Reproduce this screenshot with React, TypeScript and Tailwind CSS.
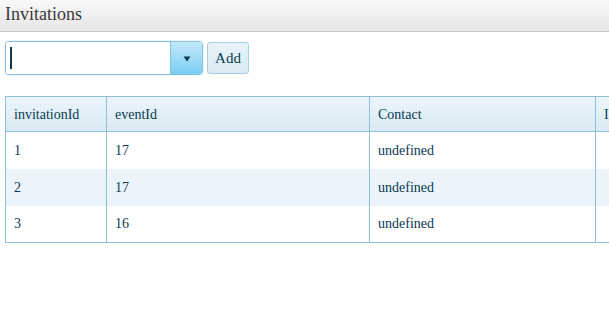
import React from 'react';

const rows = [
  { invitationId: 1, eventId: 17, contact: 'undefined' },
  { invitationId: 2, eventId: 17, contact: 'undefined' },
  { invitationId: 3, eventId: 16, contact: 'undefined' },
];

export default function App() {
  return (
    <div className="w-[609px] h-[312px] overflow-hidden bg-white text-[#0b3a52]" style={{ fontFamily: '"Liberation Serif", "Times New Roman", serif' }}>
      <div className="h-[32px] border-b border-[#c8c8c8] bg-gradient-to-b from-[#f9f9f9] to-[#e6e6e6] pl-[5px] flex items-center">
        <span className="text-[18px] text-[#3a3a3a] leading-none -mt-[4px]">Invitations</span>
      </div>

      <div className="flex items-center gap-[4px] pl-[5px] mt-[9px]">
        <div className="flex w-[198px] h-[34px] border border-[#86c1e0] rounded-[4px] overflow-hidden shadow-[0_0_2px_rgba(120,190,230,0.5)]">
          <div className="flex-1 bg-white flex items-center pl-[4px]">
            <div className="w-[2px] h-[22px] bg-[#0b3a52]" />
          </div>
          <div className="w-[32px] border-l border-[#86c1e0] bg-gradient-to-b from-[#c2eafb] to-[#79cdf1] flex items-center justify-center">
            <svg width="8" height="6" viewBox="0 0 8 6" className="mt-[1px]">
              <path d="M0.5 0.5 L7.5 0.5 L4 5.5 Z" fill="#0b3a52" />
            </svg>
          </div>
        </div>
        <button className="w-[42px] h-[32px] border border-[#a7cde2] rounded-[3px] bg-gradient-to-b from-[#e9f4fa] to-[#d9ebf5] text-[15px] text-[#0b3a52] leading-none">
          Add
        </button>
      </div>

      <div className="pl-[5px] mt-[21px]">
        <table className="border-collapse table-fixed w-[800px] text-[14px]">
          <colgroup>
            <col className="w-[101px]" />
            <col className="w-[263px]" />
            <col className="w-[226px]" />
            <col className="w-[210px]" />
          </colgroup>
          <thead>
            <tr className="h-[35px] bg-gradient-to-b from-[#ebf5fb] to-[#d9eaf4]">
              {['invitationId', 'eventId', 'Contact', 'Invited'].map((h) => (
                <th key={h} className="border border-[#8cc0d6] text-left font-normal pl-[8px]">
                  {h}
                </th>
              ))}
            </tr>
          </thead>
          <tbody>
            {rows.map((r, i) => (
              <tr key={r.invitationId} className={`h-[37px] ${i % 2 === 1 ? 'bg-[#eaf4fa]' : 'bg-white'}`}>
                <td className="border-x border-[#8cc0d6] pl-[8px]">{r.invitationId}</td>
                <td className="border-x border-[#8cc0d6] pl-[8px]">{r.eventId}</td>
                <td className="border-x border-[#8cc0d6] pl-[8px]">{r.contact}</td>
                <td className="border-x border-[#8cc0d6] pl-[8px]"></td>
              </tr>
            ))}
            <tr>
              <td colSpan={4} className="border-t border-[#8cc0d6] h-0 p-0" />
            </tr>
          </tbody>
        </table>
      </div>
    </div>
  );
}
